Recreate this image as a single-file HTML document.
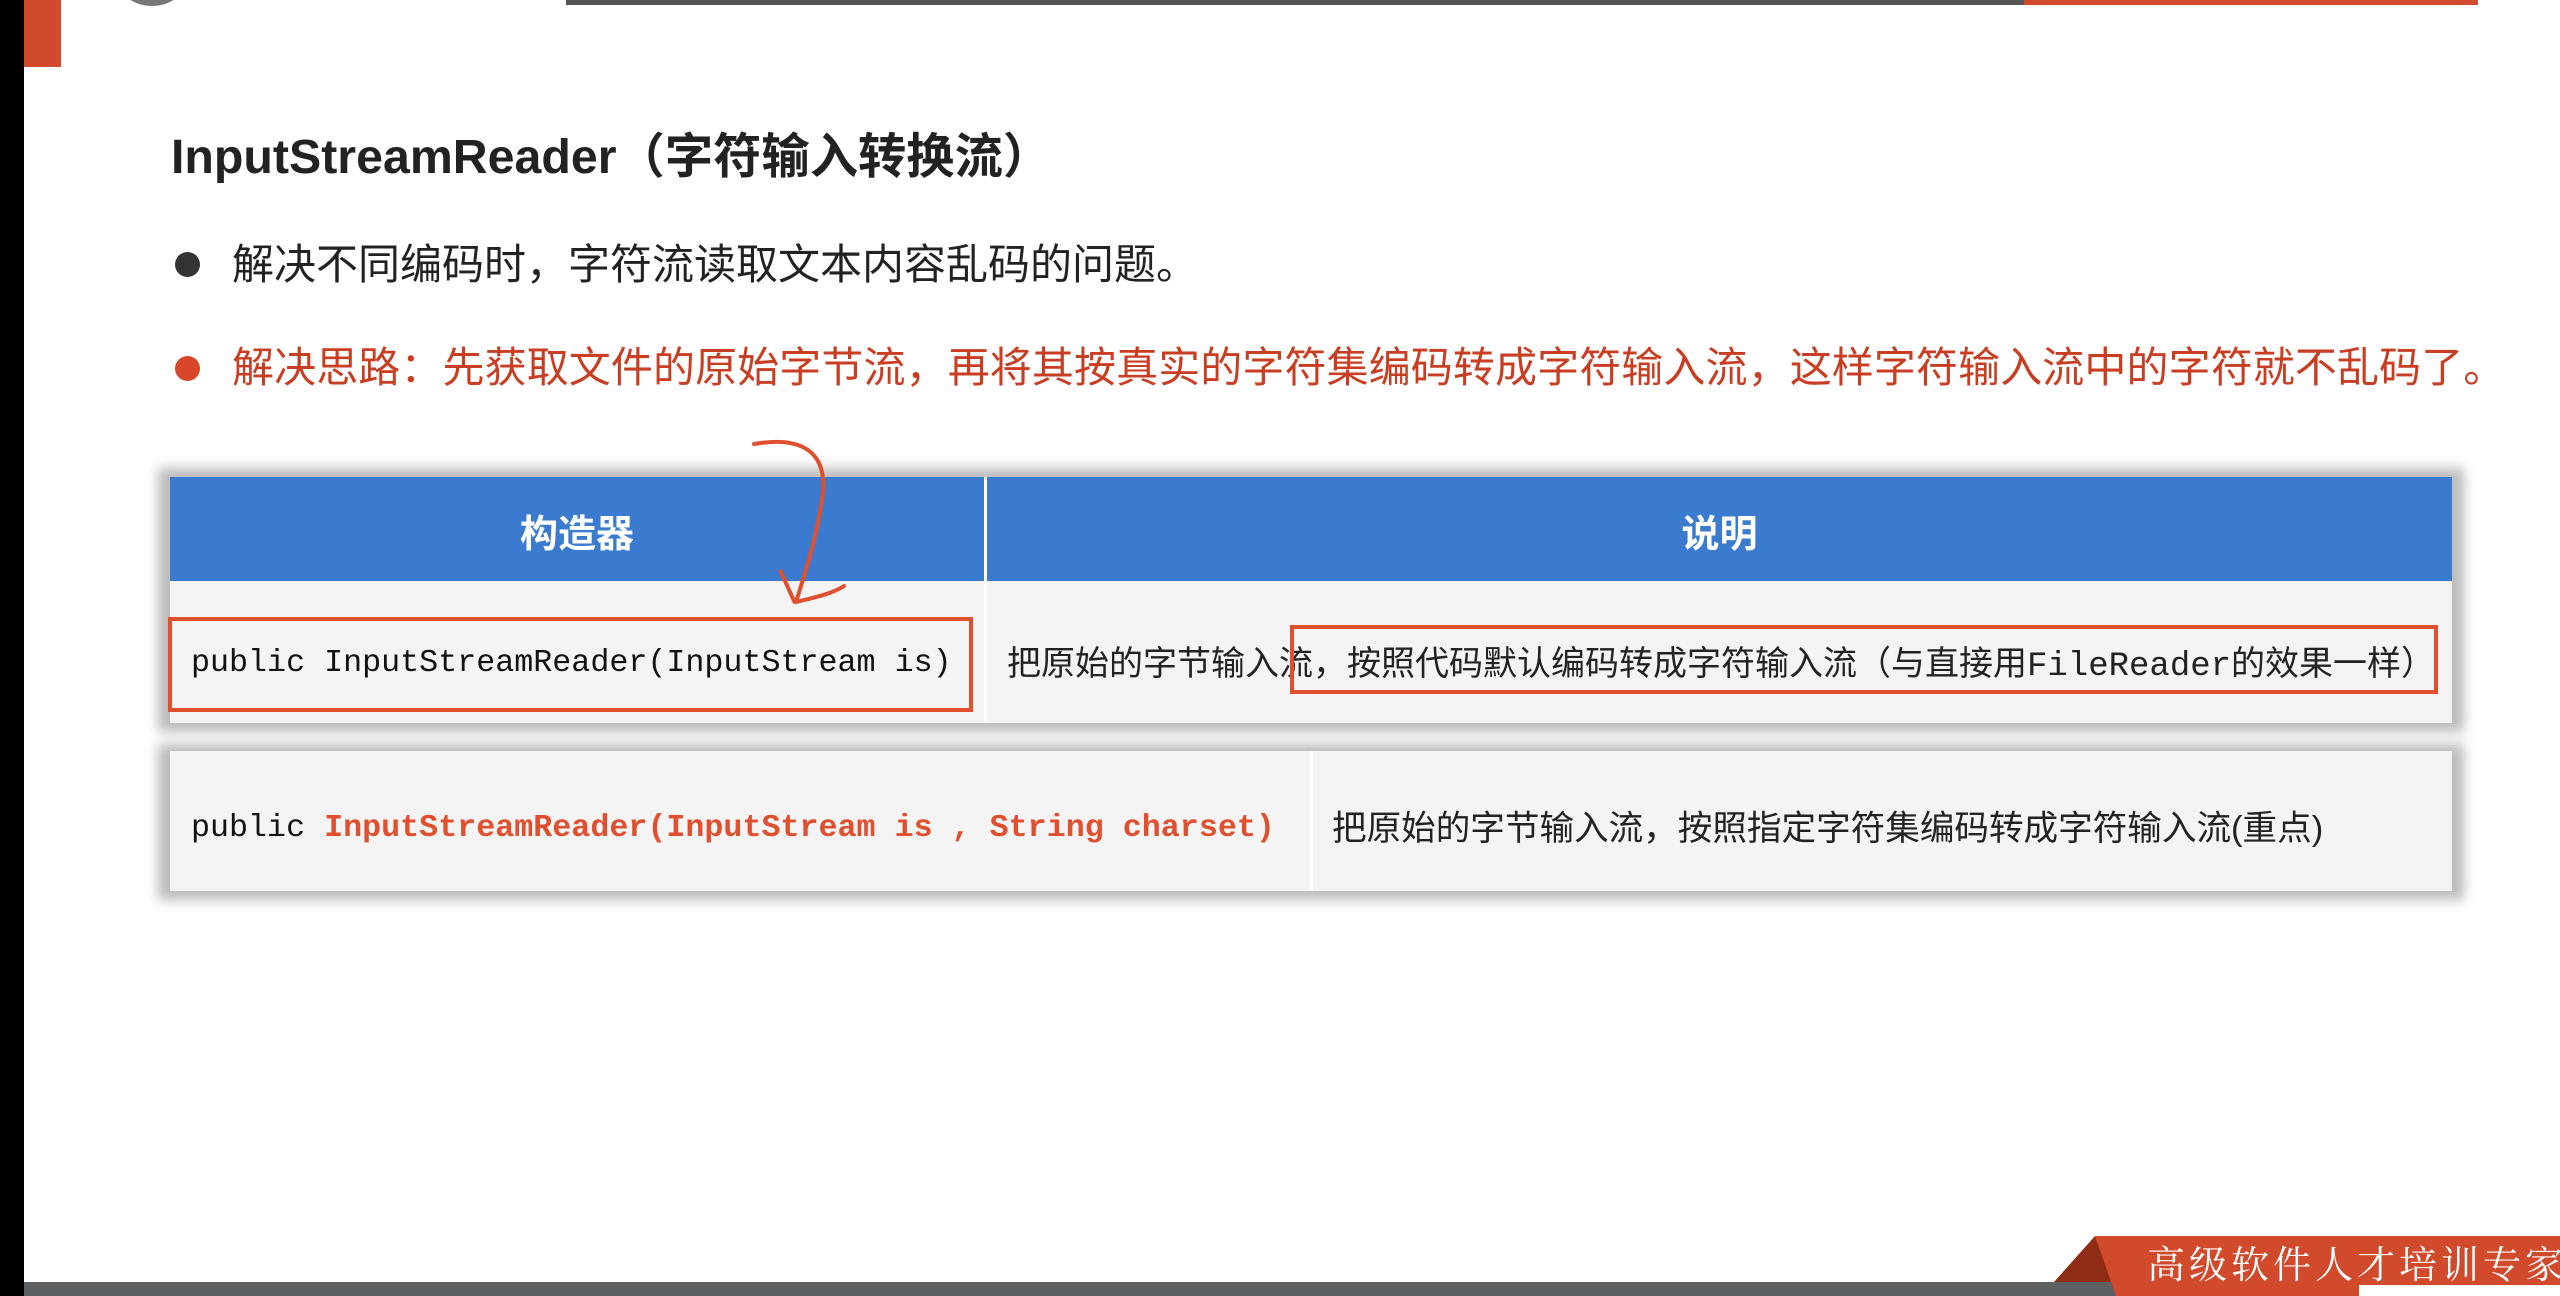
<!DOCTYPE html>
<html><head><meta charset="utf-8"><style>
*{margin:0;padding:0;box-sizing:border-box}
body{width:2560px;height:1296px;background:#fff;position:relative;overflow:hidden;font-family:"Liberation Sans","Noto Sans CJK SC",sans-serif}
.a{position:absolute}
.mono{font-family:"Liberation Mono","Noto Sans CJK SC",monospace;white-space:nowrap}
.t{white-space:nowrap;line-height:1}
</style></head><body>
<div class="a" style="left:0;top:0;width:24px;height:1296px;background:#000"></div>
<div class="a" style="left:24px;top:0;width:37px;height:67px;background:#d24a2c"></div>
<div class="a" style="left:112px;top:-70px;width:80px;height:76px;border-radius:50%;background:#777"></div>
<div class="a" style="left:566px;top:0;width:1460px;height:5px;background:#555"></div>
<div class="a" style="left:2024px;top:0;width:454px;height:5px;background:#d24a2c"></div>

<div class="a t" style="left:171px;top:133px;font-size:48.3px;font-weight:bold;color:#222">InputStreamReader（字符输入转换流）</div>
<div class="a" style="left:175px;top:252px;width:25px;height:25px;border-radius:50%;background:#333"></div>
<div class="a t" style="left:232px;top:244px;font-size:42px;color:#222">解决不同编码时，字符流读取文本内容乱码的问题。</div>
<div class="a" style="left:175px;top:356px;width:25px;height:25px;border-radius:50%;background:#d9472a"></div>
<div class="a t" style="left:232px;top:347px;font-size:42px;color:#c93e22;letter-spacing:0.1px">解决思路：先获取文件的原始字节流，再将其按真实的字符集编码转成字符输入流，这样字符输入流中的字符就不乱码了。</div>

<!-- table 1 -->
<div class="a" style="left:158px;top:468px;width:2306px;height:264px;background:#bbb;filter:blur(6px)"></div>
<div class="a" style="left:170px;top:477px;width:2282px;height:246px;background:#f4f4f4"></div>
<div class="a" style="left:170px;top:477px;width:2282px;height:104px;background:#3a7bd0"></div>
<div class="a" style="left:984px;top:477px;width:3px;height:246px;background:#fff"></div>
<div class="a t" style="left:170px;top:516px;width:814px;text-align:center;font-size:38px;font-weight:bold;color:#fff">构造器</div>
<div class="a t" style="left:987px;top:516px;width:1465px;text-align:center;font-size:38px;font-weight:bold;color:#fff">说明</div>
<div class="a mono" style="left:191px;top:645px;font-size:31.7px;color:#111">public InputStreamReader(InputStream is)</div>
<div class="a t" style="left:1007px;top:647px;font-size:34px;color:#222">把原始的字节输入流，按照代码默认编码转成字符输入流（与直接用<span class="mono">FileReader</span>的效果一样）</div>
<div class="a" style="left:168px;top:617px;width:805px;height:95px;border:4px solid #e0502f"></div>
<div class="a" style="left:1290px;top:625px;width:1148px;height:69px;border:4px solid #e0502f"></div>
<svg class="a" style="left:0;top:0" width="2560" height="1296"><path d="M754 444 C800 436 830 450 822 500 C816 540 806 570 796 602 M796 602 C812 598 832 594 844 586" fill="none" stroke="#e0502f" stroke-width="4" stroke-linecap="round"/><path d="M780 570 L795 603" stroke="#e0502f" stroke-width="4" fill="none"/></svg>

<!-- table 2 -->
<div class="a" style="left:158px;top:744px;width:2306px;height:156px;background:#bbb;filter:blur(6px)"></div>
<div class="a" style="left:170px;top:751px;width:2282px;height:140px;background:#f4f4f4"></div>
<div class="a" style="left:1310px;top:751px;width:3px;height:140px;background:#fff"></div>
<div class="a mono" style="left:191px;top:810px;font-size:31.7px;color:#111">public <span style="color:#e0502f;font-weight:bold">InputStreamReader(InputStream is , String charset)</span></div>
<div class="a t" style="left:1332px;top:812px;font-size:34.6px;color:#222">把原始的字节输入流，按照指定字符集编码转成字符输入流(重点)</div>

<!-- bottom -->
<div class="a" style="left:24px;top:1282px;width:2100px;height:14px;background:#5c6062"></div>
<svg class="a" style="left:0;top:0" width="2560" height="1296">
<polygon points="2054,1282 2095,1236 2112,1282" fill="#8e2c14"/>
<polygon points="2095,1236 2560,1236 2560,1296 2116,1296" fill="#d24a2c"/>
</svg>
<div class="a t" style="left:2147px;top:1243px;font-size:38px;color:#fff;font-family:'Noto Serif CJK SC',serif;letter-spacing:4px">高级软件人才培训专家</div>
<div class="a" style="left:2359px;top:1285px;width:201px;height:11px;background:#fff"></div>
</body></html>
